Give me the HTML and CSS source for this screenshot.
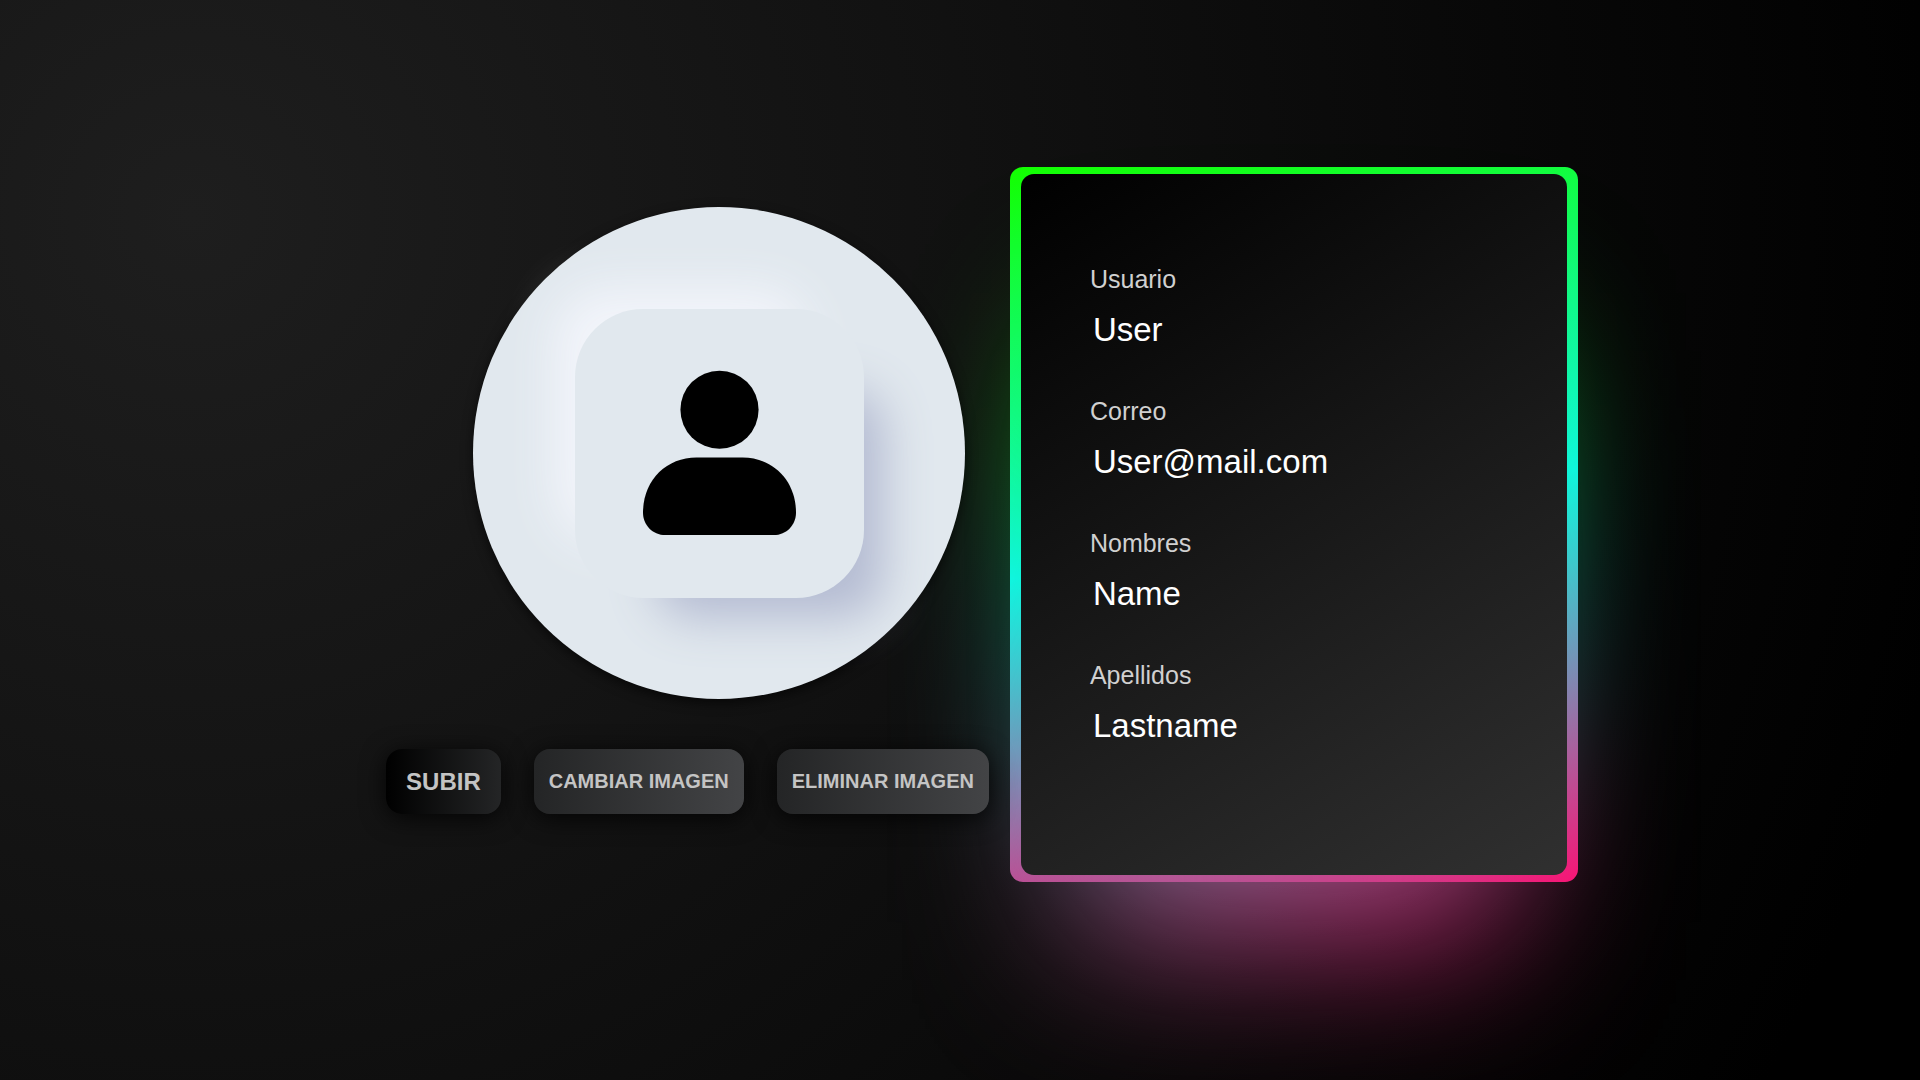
FILE: index.html
```html
<!DOCTYPE html>
<html lang="es">
<head>
<meta charset="utf-8">
<meta name="viewport" content="width=device-width, initial-scale=1">
<title>Perfil</title>
<link rel="stylesheet" href="styles.css">
</head>
<body>
<main class="profile">
  <section class="photo">
    <div class="avatar">
      <div class="avatar-tile">
        <svg class="avatar-icon" viewBox="0 0 458 494" role="img" aria-label="Usuario">
          <circle cx="229" cy="119" r="117"/>
          <path d="M0 427C0 330 70 262 160 262H298C388 262 458 330 458 427C458 463 430 494 391 494H67C28 494 0 463 0 427Z"/>
        </svg>
      </div>
    </div>
    <div class="actions">
      <button type="button" class="btn btn-primary">SUBIR</button>
      <button type="button" class="btn">CAMBIAR IMAGEN</button>
      <button type="button" class="btn">ELIMINAR IMAGEN</button>
    </div>
  </section>
  <section class="card">
    <dl class="card-body">
      <div class="field"><dt>Usuario</dt><dd>User</dd></div>
      <div class="field"><dt>Correo</dt><dd>User@mail.com</dd></div>
      <div class="field"><dt>Nombres</dt><dd>Name</dd></div>
      <div class="field"><dt>Apellidos</dt><dd>Lastname</dd></div>
    </dl>
  </section>
</main>
</body>
</html>
```
FILE: styles.css
```css
* {
  box-sizing: border-box;
}

body {
  margin: 0;
  font-family: "Liberation Sans", Arial, sans-serif;
  background: radial-gradient(circle at 10% 20%, #1e1e1e 0%, #000 93%);
}

.profile {
  display: flex;
  justify-content: center;
  align-items: center;
  gap: 21px;
  min-height: 100vh;
  padding: 0 0 31px 44px;
  overflow: hidden;
}

.photo {
  position: relative;
  z-index: 1;
  display: flex;
  flex-direction: column;
  align-items: center;
  gap: 50px;
  padding-bottom: 28px;
}

.avatar {
  display: grid;
  place-items: center;
  width: 492px;
  aspect-ratio: 1;
  margin-left: 64px;
  border-radius: 50%;
  background: #e1e8ee;
  box-shadow: 0 4px 12px rgba(0, 0, 0, .6);
}

.avatar-tile {
  display: grid;
  place-items: center;
  width: 289px;
  aspect-ratio: 1;
  border-radius: 68px;
  background: #e1e8ee;
  box-shadow: 50px 50px 48px -30px #b4bbd2, -38px -38px 48px -18px #f3f5fb;
}

.avatar-icon {
  width: 153px;
}

.actions {
  display: flex;
  gap: 33px;
}

.btn {
  height: 65px;
  padding: 0 15px;
  border: 0;
  border-radius: 16px;
  background: linear-gradient(to right, #242526, #434446);
  box-shadow: 0 4px 24px rgba(0, 0, 0, .8);
  color: #c4c4c4;
  font: bold 20px "Liberation Sans", Arial, sans-serif;
}

.btn-primary {
  padding: 0 20px;
  background: linear-gradient(to right, #000, #242526);
  font-size: 24px;
}

.card {
  position: relative;
  z-index: 0;
  width: 568px;
  padding: 7px 11px;
  border-radius: 13px;
  background: linear-gradient(169deg, #14ff00, #0ff5f0 50%, #ff0f73);
}

/* Coloured glow around the card */
.card::before {
  content: "";
  position: absolute;
  z-index: -1;
  inset: 0;
  background: linear-gradient(169deg, #14ff00 10%, #0ff5dc 46%, #ff0f73 96%);
  transform: translateY(112px) scale(.75, .8);
  filter: blur(108px);
}

.card-body {
  display: flex;
  flex-direction: column;
  gap: 39px;
  min-height: 701px;
  margin: 0;
  padding: 89px 69px;
  border-radius: 13px;
  background: linear-gradient(150deg, #000, #303030);
}

.field {
  display: flex;
  flex-direction: column;
  gap: 9px;
}

.field dt {
  color: #d0d0d0;
  font-size: 25px;
  line-height: 32px;
}

.field dd {
  margin: 0;
  padding-left: 3px;
  color: #fff;
  font-size: 33px;
  line-height: 52px;
}
```
